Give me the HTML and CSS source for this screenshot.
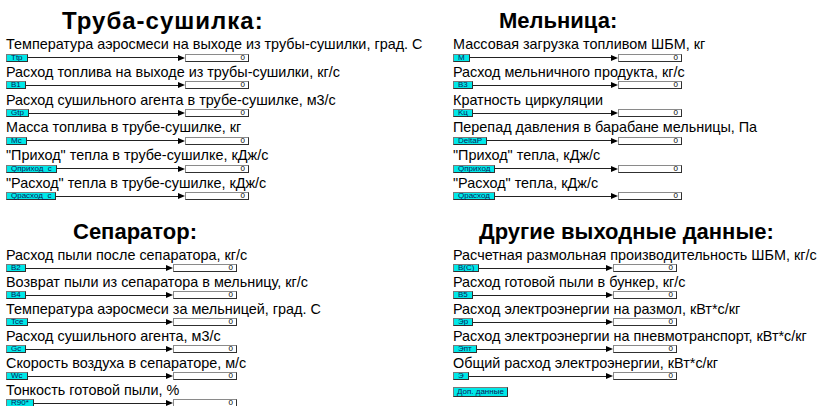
FILE: index.html
```html
<!DOCTYPE html>
<html lang="ru">
<head>
<meta charset="utf-8">
<title>Выходные данные</title>
<link rel="stylesheet" href="styles.css">
</head>
<body>
<div class="board">
  <div class="col col-left">
    <section class="group g-top g-tube">
      <h2 class="title">Труба-сушилка:</h2>
      <div class="row"><div class="label">Температура аэросмеси на выходе из трубы-сушилки, град. С</div><div class="wire"><span class="tag">Ttp</span><span class="line"></span><span class="arrow"></span><span class="val">0</span></div></div>
      <div class="row"><div class="label">Расход топлива на выходе из трубы-сушилки, кг/с</div><div class="wire"><span class="tag">B1</span><span class="line"></span><span class="arrow"></span><span class="val">0</span></div></div>
      <div class="row"><div class="label">Расход сушильного агента в трубе-сушилке, м3/с</div><div class="wire"><span class="tag">Gtp</span><span class="line"></span><span class="arrow"></span><span class="val">0</span></div></div>
      <div class="row"><div class="label">Масса топлива в трубе-сушилке, кг</div><div class="wire"><span class="tag">Mc</span><span class="line"></span><span class="arrow"></span><span class="val">0</span></div></div>
      <div class="row"><div class="label">"Приход" тепла в трубе-сушилке, кДж/с</div><div class="wire"><span class="tag">Qприход_с</span><span class="line"></span><span class="arrow"></span><span class="val">0</span></div></div>
      <div class="row"><div class="label">"Расход" тепла в трубе-сушилке, кДж/с</div><div class="wire"><span class="tag">Qрасход_с</span><span class="line"></span><span class="arrow"></span><span class="val">0</span></div></div>
    </section>
    <section class="group g-bottom g-sep">
      <h2 class="title">Сепаратор:</h2>
      <div class="row"><div class="label">Расход пыли после сепаратора, кг/с</div><div class="wire"><span class="tag">B2</span><span class="line"></span><span class="arrow"></span><span class="val">0</span></div></div>
      <div class="row"><div class="label">Возврат пыли из сепаратора в мельницу, кг/с</div><div class="wire"><span class="tag">B4</span><span class="line"></span><span class="arrow"></span><span class="val">0</span></div></div>
      <div class="row"><div class="label">Температура аэросмеси за мельницей, град. С</div><div class="wire"><span class="tag">Tce</span><span class="line"></span><span class="arrow"></span><span class="val">0</span></div></div>
      <div class="row"><div class="label">Расход сушильного агента, м3/с</div><div class="wire"><span class="tag">Gc</span><span class="line"></span><span class="arrow"></span><span class="val">0</span></div></div>
      <div class="row"><div class="label">Скорость воздуха в сепараторе, м/с</div><div class="wire"><span class="tag">Wc</span><span class="line"></span><span class="arrow"></span><span class="val">0</span></div></div>
      <div class="row"><div class="label">Тонкость готовой пыли, %</div><div class="wire"><span class="tag">R90*</span><span class="line"></span><span class="arrow"></span><span class="val">0</span></div></div>
    </section>
  </div>
  <div class="col col-right">
    <section class="group g-top g-mill">
      <h2 class="title">Мельница:</h2>
      <div class="row"><div class="label">Массовая загрузка топливом ШБМ, кг</div><div class="wire"><span class="tag">M</span><span class="line"></span><span class="arrow"></span><span class="val">0</span></div></div>
      <div class="row"><div class="label">Расход мельничного продукта, кг/с</div><div class="wire"><span class="tag">B3</span><span class="line"></span><span class="arrow"></span><span class="val">0</span></div></div>
      <div class="row"><div class="label">Кратность циркуляции</div><div class="wire"><span class="tag">Kц</span><span class="line"></span><span class="arrow"></span><span class="val">0</span></div></div>
      <div class="row"><div class="label">Перепад давления в барабане мельницы, Па</div><div class="wire"><span class="tag">DeltaP</span><span class="line"></span><span class="arrow"></span><span class="val">0</span></div></div>
      <div class="row"><div class="label">"Приход" тепла, кДж/с</div><div class="wire"><span class="tag">Qприход</span><span class="line"></span><span class="arrow"></span><span class="val">0</span></div></div>
      <div class="row"><div class="label">"Расход" тепла, кДж/с</div><div class="wire"><span class="tag">Qрасход</span><span class="line"></span><span class="arrow"></span><span class="val">0</span></div></div>
    </section>
    <section class="group g-bottom g-other">
      <h2 class="title">Другие выходные данные:</h2>
      <div class="row"><div class="label">Расчетная размольная производительность ШБМ, кг/с</div><div class="wire"><span class="tag">B(C)</span><span class="line"></span><span class="arrow"></span><span class="val">0</span></div></div>
      <div class="row"><div class="label">Расход готовой пыли в бункер, кг/с</div><div class="wire"><span class="tag">B5</span><span class="line"></span><span class="arrow"></span><span class="val">0</span></div></div>
      <div class="row"><div class="label">Расход электроэнергии на размол, кВт*с/кг</div><div class="wire"><span class="tag">Эр</span><span class="line"></span><span class="arrow"></span><span class="val">0</span></div></div>
      <div class="row"><div class="label">Расход электроэнергии на пневмотранспорт, кВт*с/кг</div><div class="wire"><span class="tag">Эпт</span><span class="line"></span><span class="arrow"></span><span class="val">0</span></div></div>
      <div class="row"><div class="label">Общий расход электроэнергии, кВт*с/кг</div><div class="wire"><span class="tag">Э</span><span class="line"></span><span class="arrow"></span><span class="val">0</span></div></div>
      <button class="tag btn" type="button">Доп. данные</button>
    </section>
  </div>
</div>
</body>
</html>
```
FILE: styles.css
```css
html, body {
  margin: 0;
  padding: 0;
  background: #ffffff;
}

body {
  font-family: "Liberation Sans", Arial, sans-serif;
  color: #000000;
  overflow: hidden;
}

.board {
  display: flex;
  padding: 9px 0 0 6px;
}

.col {
  display: flex;
  flex-direction: column;
}

.col-left {
  width: 447px;
}

.group {
  display: flex;
  flex-direction: column;
}

.g-bottom {
  margin-top: 17px;
}

.title {
  margin: 0 0 3px 0;
  font-size: 22px;
  line-height: 24px;
  font-weight: bold;
  white-space: nowrap;
}

/* the first heading is set a little larger and looser */
.g-tube .title {
  padding-left: 56px;
  font-size: 24px;
  letter-spacing: 1px;
}

.g-sep .title { padding-left: 67px; }
.g-mill .title { padding-left: 46px; }
.g-other .title { padding-left: 26px; }

.row {
  display: flex;
  flex-direction: column;
}

.g-top .row { height: 27.8px; }
.g-bottom .row { height: 27px; }

.label {
  font-size: 14.4px;
  line-height: 16px;
  white-space: nowrap;
}

.wire {
  display: flex;
  align-items: center;
  height: 9px;
  margin-top: 1px;
}

.g-tube .wire { width: 243px; }
.g-sep .wire { width: 231px; }
.g-mill .wire { width: 229px; }
.g-other .wire { width: 224px; }

.tag {
  display: inline-flex;
  align-items: center;
  justify-content: center;
  box-sizing: border-box;
  height: 8px;
  padding: 0 4px;
  background: #00e8e8;
  border: 1px solid #303030;
  border-top-color: #7a7a7a;
  border-left-color: #7a7a7a;
  color: #0a1a5a;
  font-family: "Liberation Sans", Arial, sans-serif;
  font-size: 8px;
  line-height: 6px;
  white-space: nowrap;
}

.line {
  flex: 1;
  height: 1px;
  background: #222222;
}

.arrow {
  width: 0;
  height: 0;
  border-top: 3px solid transparent;
  border-bottom: 3px solid transparent;
  border-left: 7px solid #000000;
}

.val {
  box-sizing: border-box;
  width: 64px;
  height: 8px;
  padding-right: 3px;
  border: 1px solid #8a8a8a;
  border-right-color: #303030;
  border-bottom-color: #303030;
  background: #ffffff;
  font-size: 8px;
  line-height: 6px;
  text-align: right;
}

.btn {
  align-self: flex-start;
  margin-top: 5px;
  height: 10px;
  padding: 0 3px;
  font-size: 8px;
  cursor: pointer;
}
```
